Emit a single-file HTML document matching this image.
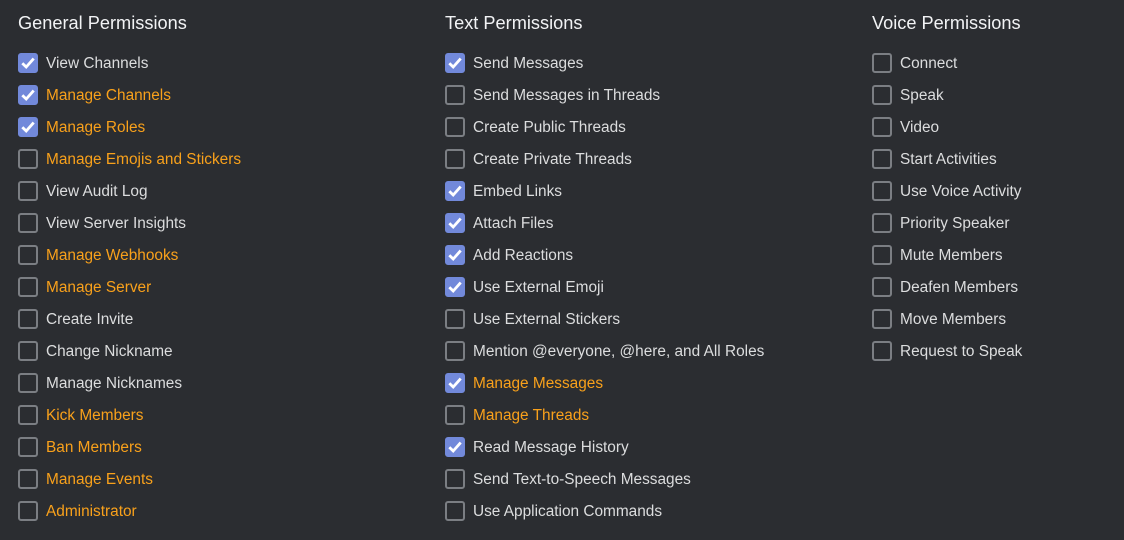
<!DOCTYPE html>
<html><head><meta charset="utf-8"><style>
html,body{margin:0;padding:0;}
body{width:1124px;height:540px;background:#2b2d31;font-family:"Liberation Sans",sans-serif;position:relative;overflow:hidden;}
.col{position:absolute;top:0;}
h2{position:absolute;top:13px;left:0;margin:0;font-size:18.2px;font-weight:normal;color:#f2f3f5;white-space:nowrap;}
.row{position:absolute;left:0;height:20px;white-space:nowrap;}
.cb{position:absolute;left:0;top:0;width:16px;height:16px;border:2px solid #7b7e83;border-radius:3px;box-sizing:content-box;}
.cb.on{background:#7289da;border-color:#7289da;}
.cb svg{position:absolute;left:0;top:0;}
.t{position:absolute;left:28px;top:2px;font-size:15.4px;line-height:18px;color:#dcddde;}
.o{color:#f9a11b;}
</style></head><body>
<div id="c"></div>
<script>
const cols=[
[18,"General Permissions",[
["View Channels",1,0],["Manage Channels",1,1],["Manage Roles",1,1],["Manage Emojis and Stickers",0,1],["View Audit Log",0,0],["View Server Insights",0,0],["Manage Webhooks",0,1],["Manage Server",0,1],["Create Invite",0,0],["Change Nickname",0,0],["Manage Nicknames",0,0],["Kick Members",0,1],["Ban Members",0,1],["Manage Events",0,1],["Administrator",0,1]]],
[445,"Text Permissions",[
["Send Messages",1,0],["Send Messages in Threads",0,0],["Create Public Threads",0,0],["Create Private Threads",0,0],["Embed Links",1,0],["Attach Files",1,0],["Add Reactions",1,0],["Use External Emoji",1,0],["Use External Stickers",0,0],["Mention @everyone, @here, and All Roles",0,0],["Manage Messages",1,1],["Manage Threads",0,1],["Read Message History",1,0],["Send Text-to-Speech Messages",0,0],["Use Application Commands",0,0]]],
[872,"Voice Permissions",[
["Connect",0,0],["Speak",0,0],["Video",0,0],["Start Activities",0,0],["Use Voice Activity",0,0],["Priority Speaker",0,0],["Mute Members",0,0],["Deafen Members",0,0],["Move Members",0,0],["Request to Speak",0,0]]]];
let h="";
for(const [x,title,rows] of cols){
 h+=`<div class="col" style="left:${x}px"><h2>${title}</h2>`;
 rows.forEach((r,i)=>{
  const y=53+i*32;
  h+=`<div class="row" style="top:${y}px"><div class="cb${r[1]?' on':''}">${r[1]?'<svg width="16" height="16" viewBox="0 0 16 16"><path d="M2.3 8.2 L6.2 12 L13.7 3.6" fill="none" stroke="#fff" stroke-width="2.8"/></svg>':''}</div><div class="t${r[2]?' o':''}">${r[0]}</div></div>`;
 });
 h+=`</div>`;
}
document.getElementById("c").innerHTML=h;
</script>
</body></html>
